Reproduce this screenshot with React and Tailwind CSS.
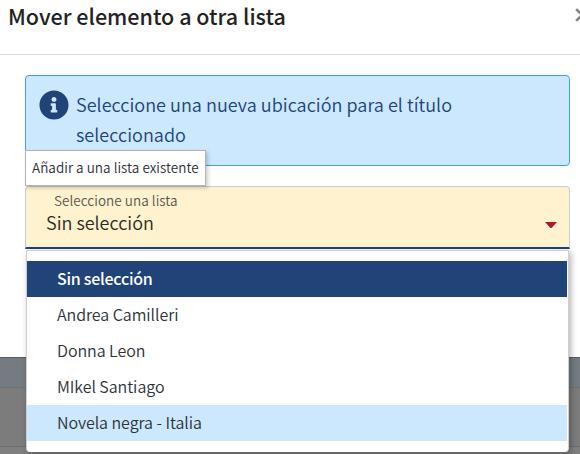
const lists = ['Sin selección', 'Andrea Camilleri', 'Donna Leon', 'MIkel Santiago', 'Novela negra - Italia'];

function optionClass(i) {
  if (i === 0) return 'bg-[#204378] text-white font-medium tracking-[-0.27px]';
  if (i === 4) return 'bg-[#cce8ff] text-[#2c3238] font-[350] tracking-[-0.06px]';
  return 'text-[#2c3238] font-[350] tracking-[-0.05px]';
}

function Header() {
  return (
    <header className="flex h-[55px] justify-between overflow-hidden border-b border-[#dcdde6] pl-[8px]">
      <h1 className="h-[34px] text-[21.500px] leading-[32px] font-medium text-[#222]">Mover elemento a otra lista</h1>
      <svg className="mt-[8px] -mr-[9px] h-[14px] w-[14px] shrink-0" viewBox="0 0 14 14" fill="none" stroke="#808080" strokeWidth="2.6">
        <path d="M1.2 1.2 L12.8 12.8 M12.8 1.2 L1.2 12.8" />
      </svg>
    </header>
  );
}

function InfoAlert() {
  return (
    <div className="flex h-[91px] rounded-[4px] border border-[#3d9fe8] bg-[#cce8ff] pt-[13px] pl-[12.500px] text-[#204378]">
      <svg className="mt-px h-[30px] w-[30px] shrink-0" viewBox="0 0 512 512" fill="#204378">
        <path d="M256 8C119 8 8 119 8 256s111 248 248 248 248-111 248-248S393 8 256 8zm0 110c23.200 0 42 18.800 42 42s-18.800 42-42 42-42-18.800-42-42 18.800-42 42-42zm56 254c0 6.600-5.400 12-12 12h-88c-6.600 0-12-5.400-12-12v-24c0-6.600 5.400-12 12-12h12v-64h-12c-6.600 0-12-5.400-12-12v-24c0-6.600 5.400-12 12-12h64c6.600 0 12 5.400 12 12v100h12c6.600 0 12 5.400 12 12v24z" />
      </svg>
      <p className="ml-[7.500px] text-[18px] leading-[30px] font-[350] tracking-[0.035px] whitespace-nowrap">
        Seleccione una nueva ubicación para el título
        <br />
        seleccionado
      </p>
    </div>
  );
}

function SelectField() {
  return (
    <div className="mt-[20px] flex h-[63px] justify-between rounded-t-[4px] border border-b-2 border-[#c8cad8] border-b-[#204378] bg-[#fff2ce] font-[350]">
      <div>
        <div className="mt-[3px] ml-[28px] h-[20px] text-[13.500px] leading-[20px] tracking-[0.05px] text-[#5c5850]">Seleccione una lista</div>
        <div className="ml-[20px] h-[24px] text-[18px] leading-[24px] text-[#2c2a25]">Sin selección</div>
      </div>
      <svg className="mt-[35px] mr-[12px] h-[6px] w-[12px]" viewBox="0 0 12 6" fill="#b3152c">
        <path d="M0 0H12L6.800 5.700Q6 6.300 5.200 5.700Z" />
      </svg>
    </div>
  );
}

export default function App() {
  return (
    <div
      className="relative flex h-[454px] w-[580px] flex-col overflow-hidden bg-[#7f7f7f]"
      style={{ fontFamily: '"Noto Sans CJK SC", "Source Sans Pro", sans-serif' }}
    >
      <section className="h-[357px] shrink-0 bg-white">
        <Header />
        <main className="pt-[20px] pr-[10px] pl-[25px]">
          <InfoAlert />
          <SelectField />
        </main>
      </section>
      <div className="h-[31px] shrink-0 border-y border-t-[#575c61] border-b-[#69727c] bg-[#747c82]" />
      <div className="h-[59px] shrink-0 border-b border-[#6d6e70] bg-[#7c7c7c]" />

      <ul className="absolute top-[250px] left-[26px] h-[202px] w-[543px] rounded-b-[4px] border border-b-0 border-[#cfcfcf] bg-white pt-[10px] pr-px shadow-[2px_2px_6px_rgba(0,0,0,0.3)]">
        {lists.map((name, i) => (
          <li key={name} className={`h-[36px] pl-[30px] text-[16px] leading-[34px] ${optionClass(i)}`}>
            {name}
          </li>
        ))}
      </ul>

      <div className="absolute top-[150px] left-[25px] h-[36px] w-[181px] border border-[#b4b4b8] bg-white pl-[6px] text-[13.500px] leading-[33px] font-[350] tracking-[0.03px] whitespace-nowrap text-[#2f2f35] shadow-[2px_2px_4px_rgba(0,0,0,0.2)]">
        Añadir a una lista existente
      </div>
    </div>
  );
}
